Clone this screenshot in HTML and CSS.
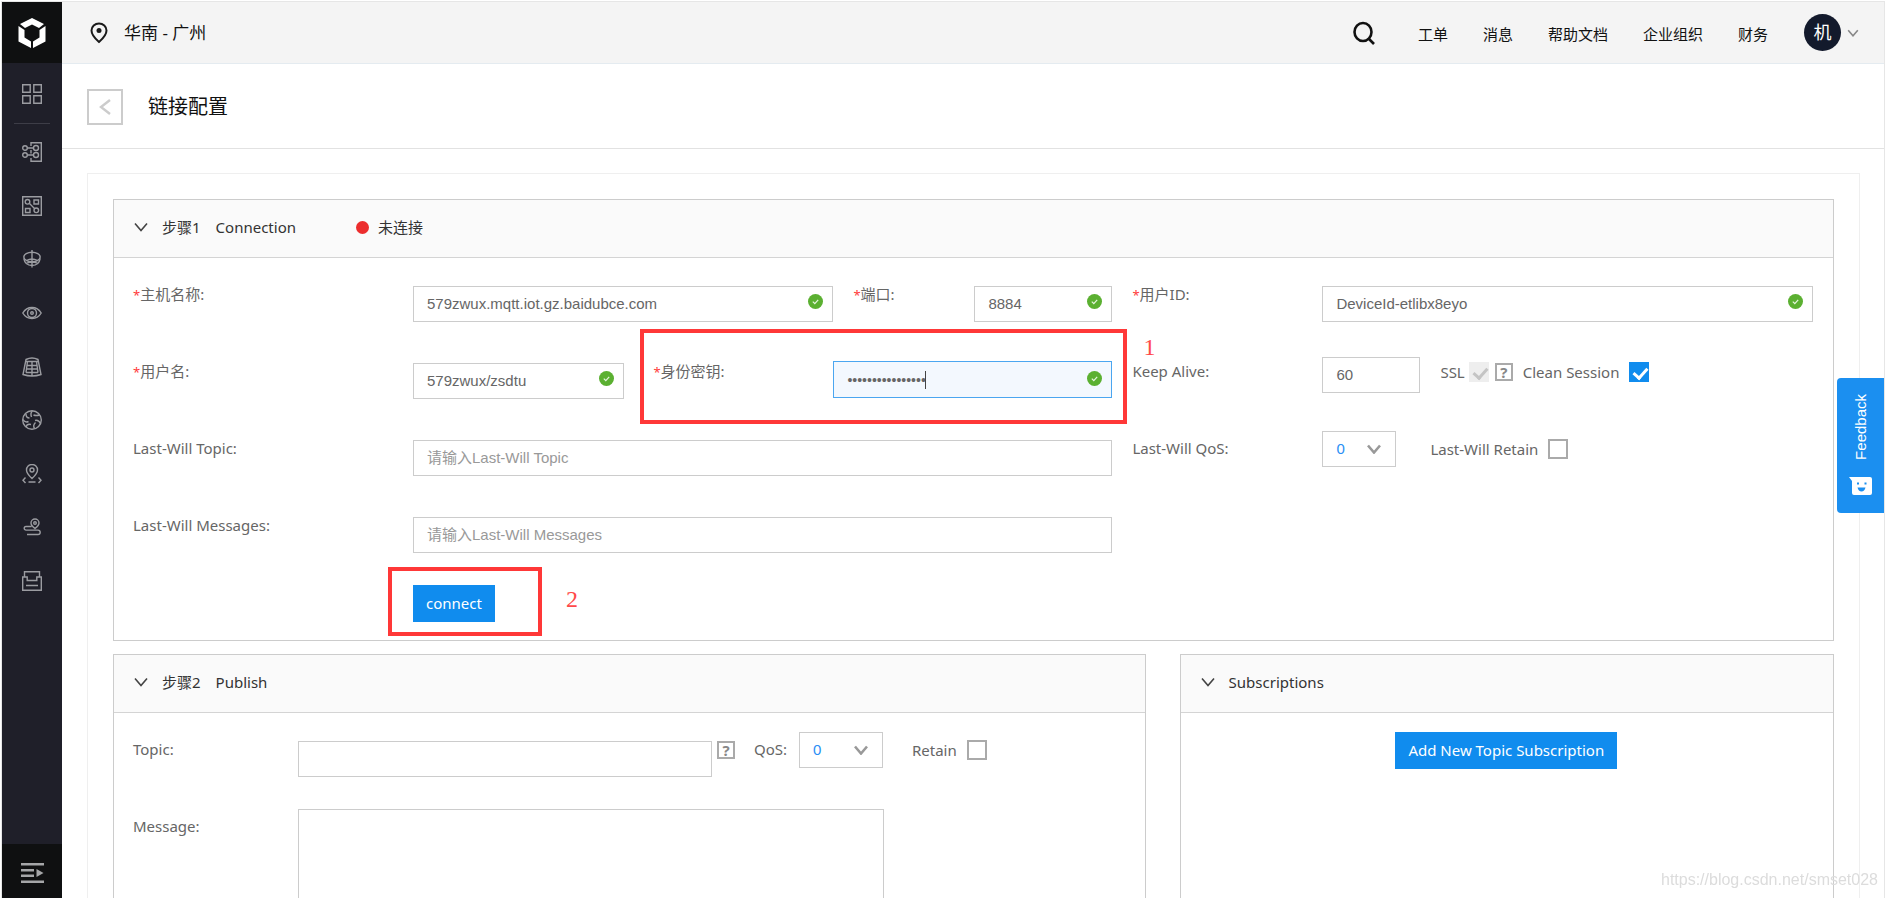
FILE: index.html
```html
<!DOCTYPE html>
<html lang="zh-CN">
<head>
    <meta charset="UTF-8">
    <title>链接配置</title>
    <link rel="stylesheet" href="styles.css">
</head>
<body>
<svg class="defs" aria-hidden="true">
    <symbol id="ok" viewBox="0 0 15 15">
        <circle cx="7.5" cy="7.5" r="7.5" fill="#5bb031"/>
        <path d="M4.8 7.6l2 2 3.4-3.8" fill="none" stroke="#e6f5df" stroke-width="1.2"/>
    </symbol>
    <symbol id="down" viewBox="0 0 14 10">
        <path d="M1 1.5l6 7 6-7" fill="none" stroke="currentColor"/>
    </symbol>
</svg>

<div class="app">
    <!-- 左侧导航 -->
    <nav class="side">
        <a class="logo" href="#" aria-label="首页">
            <svg width="30" height="32" viewBox="0 0 30 32">
                <path d="M15 1l12 6-5 4-7-3.500-7 3.500-5-4z"/>
                <path d="M1.500 9l6 4v7.500L14 24.500V31L1.500 24.500z"/>
                <path d="M28.500 9l-6 4v7.500L16 24.500V31l12.500-6.500z"/>
            </svg>
        </a>
        <a class="all" href="#" aria-label="全部产品">
            <svg width="20" height="20" viewBox="0 0 20 20"><path d="M.7.700h7.500v7.500H.7zM11.800.700h7.500v7.500h-7.500zM.7 11.800h7.500v7.500H.7zM11.800 11.800h7.500v7.500h-7.500z"/></svg>
        </a>
        <ul>
            <li><a href="#" aria-label="物接入"><svg width="20" height="20" viewBox="0 0 20 20"><path d="M9 4V.7h10.300v18.600H9V16M9 8v3.500M5.500 6h6M5.500 13h6"/><circle cx="3" cy="6" r="2.300"/><circle cx="3" cy="13" r="2.300"/><circle cx="14" cy="6" r="2.500"/><circle cx="14" cy="13" r="2.500"/></svg></a></li>
            <li><a href="#" aria-label="物管理"><svg width="20" height="20" viewBox="0 0 20 20"><path d="M.7.700h18.600v18.600H.7zM12 4h4.500v4H12zM3.500 12.500H8v4H3.500zM7.500 7.500l5 5"/><circle cx="5.500" cy="5.800" r="2.300"/><circle cx="14.300" cy="14.300" r="2.300"/></svg></a></li>
            <li><a href="#" aria-label="时序数据库"><svg width="20" height="20" viewBox="0 0 20 20"><ellipse cx="10" cy="8" rx="8.200" ry="4.800"/><path d="M10 1v17.500M4.500 11.500q5.500-3 11 0M1.800 9.500Q3 16.500 10 16.500t8.200-7M4.500 14.300q5.500-2.500 11 0"/></svg></a></li>
            <li><a href="#" aria-label="物可视"><svg width="20" height="20" viewBox="0 0 20 20"><path d="M.8 10Q4 4.500 10 4.500T19.200 10Q16 15.500 10 15.500T.8 10z"/><circle cx="10" cy="10" r="4.500"/><circle cx="10" cy="10" r="1.300"/></svg></a></li>
            <li><a href="#" aria-label="规则引擎"><svg width="20" height="20" viewBox="0 0 20 20"><path d="M4 2.500q6-3 12 0l3 15q-9 3-18 0zM4 4.500h12M5 8.500h10M4.500 12h11M4 15.500h12M10 4.500V19M5.500 4.500L4 15.500M14.500 4.500l1.500 11"/></svg></a></li>
            <li><a href="#" aria-label="物解析"><svg width="20" height="20" viewBox="0 0 20 20"><circle cx="10" cy="10" r="9.300"/><path d="M10.500 1Q8 3 9.500 7M4 4q0 4 3.500 4M1 9.500q2 3.500 5.500 2M4 17q1-3.500 5-2.500M12.500 18.500q-2-3 1-6M18.500 13.500q-2-4-5.500-3M17.500 5q-3.500 1-6 0"/></svg></a></li>
            <li><a href="#" aria-label="位置服务"><svg width="20" height="20" viewBox="0 0 20 20"><path d="M10 14.500Q4.500 9.500 4.500 6a5.500 5.500 0 0 1 11 0q0 3.500-5.500 8.500zM6.500 18h7M3.500 13.500L1 16.200l2.500 2.700M16.500 13.500l2.500 2.700-2.500 2.700"/><circle cx="10" cy="6" r="2"/></svg></a></li>
            <li><a href="#" aria-label="轨迹服务"><svg width="20" height="20" viewBox="0 0 20 20"><path d="M9.500 9.500H4a1.800 1.800 0 0 0 0 3.600h12a2.200 2.200 0 0 1 0 4.400H5M13 11.500Q9 8.500 9 6a4 4 0 0 1 8 0q0 2.500-4 5.500z"/><circle cx="13" cy="6" r="1.300"/></svg></a></li>
            <li><a href="#" aria-label="存储"><svg width="20" height="20" viewBox="0 0 20 20"><path d="M2.500 6V.7h15V6M.7 6h4.500v3.500h9.600V6h4.500v13.300H.7zM4 14.500h12"/></svg></a></li>
        </ul>
        <button class="expand" type="button" aria-label="展开菜单">
            <svg width="23" height="20" viewBox="0 0 23 20" fill="#a5a6a8"><path d="M0 0h23v2.500H0zM0 6h13v2.500H0zM0 11.500h13V14H0zM0 17.500h23V20H0zM15.500 6l7 4-7 4z"/></svg>
        </button>
    </nav>

    <div class="main">
        <header class="top">
            <svg class="pin" width="18" height="22" viewBox="0 0 18 22"><path d="M9 20Q1.500 13.500 1.500 8.500a7.500 7 0 0 1 15 0Q16.500 13.500 9 20z" fill="none" stroke="#1a1a1a" stroke-width="2"/><circle cx="9" cy="8.500" r="2.500" fill="#1a1a1a"/></svg>
            <span class="region">华南 - 广州</span>
            <button class="search" type="button" aria-label="搜索">
                <svg width="22" height="24" viewBox="0 0 22 24" fill="none" stroke="#111" stroke-width="2.600"><ellipse cx="10" cy="11" rx="8.500" ry="9"/><path d="M15.500 17.500l5.500 5.500"/></svg>
            </button>
            <a href="#">工单</a>
            <a href="#">消息</a>
            <a href="#">帮助文档</a>
            <a href="#">企业组织</a>
            <a href="#">财务</a>
            <button class="user" type="button">
                <span>机</span>
                <svg width="12" height="8"><use href="#down"/></svg>
            </button>
        </header>

        <div class="title">
            <button class="back" type="button" aria-label="返回"><svg width="12" height="16" viewBox="0 0 12 16"><path d="M11 1L2 8l9 7" fill="none" stroke="#ccc" stroke-width="2.400"/></svg></button>
            <h1>链接配置</h1>
        </div>

        <div class="content">
            <section class="panel">
                <h2>
                    <svg width="14" height="10"><use href="#down"/></svg>
                    <span class="step">步骤1</span>Connection
                    <span class="status">未连接</span>
                </h2>
                <form class="body conn">
                    <div class="row">
                        <label class="w280" for="host"><i>*</i>主机名称:</label>
                        <div class="field grow">
                            <input id="host" type="text" value="579zwux.mqtt.iot.gz.baidubce.com">
                            <svg class="ok"><use href="#ok"/></svg>
                        </div>
                        <label class="port-label" for="port"><i>*</i>端口:</label>
                        <div class="field port">
                            <input id="port" type="text" value="8884">
                            <svg class="ok"><use href="#ok"/></svg>
                        </div>
                    </div>
                    <div class="row">
                        <label class="w190" for="uid"><i>*</i>用户ID:</label>
                        <div class="field grow">
                            <input id="uid" type="text" value="DeviceId-etlibx8eyo">
                            <svg class="ok"><use href="#ok"/></svg>
                        </div>
                    </div>

                    <div class="row">
                        <label class="w280" for="uname"><i>*</i>用户名:</label>
                        <div class="field grow">
                            <input id="uname" type="text" value="579zwux/zsdtu">
                            <svg class="ok"><use href="#ok"/></svg>
                        </div>
                        <div class="secret">
                            <label for="pwd"><i>*</i>身份密钥:</label>
                            <div class="field grow active">
                                <input id="pwd" type="password" value="abcdefgh12345678">
                                <svg class="ok"><use href="#ok"/></svg>
                            </div>
                            <span class="mark"></span>
                            <span class="mark-no">1</span>
                        </div>
                    </div>
                    <div class="row">
                        <label class="w190" for="alive">Keep Alive:</label>
                        <div class="field alive"><input id="alive" type="text" value="60"></div>
                        <div class="opts">
                            <label class="check">SSL<input type="checkbox" checked disabled></label>
                            <button class="help" type="button">?</button>
                            <label class="check wide">Clean Session<input type="checkbox" checked></label>
                        </div>
                    </div>

                    <div class="row">
                        <label class="w280" for="wtopic">Last-Will Topic:</label>
                        <div class="field grow"><input id="wtopic" type="text" placeholder="请输入Last-Will Topic"></div>
                    </div>
                    <div class="row">
                        <label class="w190" for="wqos">Last-Will QoS:</label>
                        <div class="select">
                            <select id="wqos"><option>0</option><option>1</option></select>
                            <svg width="14" height="10"><use href="#down"/></svg>
                        </div>
                        <div class="opts retain">
                            <label class="check wide">Last-Will Retain<input type="checkbox"></label>
                        </div>
                    </div>

                    <div class="row left">
                        <label class="w280" for="wmsg">Last-Will Messages:</label>
                        <div class="field grow"><input id="wmsg" type="text" placeholder="请输入Last-Will Messages"></div>
                    </div>

                    <div class="submit left">
                        <button class="btn" type="button">connect</button>
                        <span class="mark"></span>
                        <span class="mark-no">2</span>
                    </div>
                </form>
            </section>

            <div class="cols">
                <section class="panel">
                    <h2>
                        <svg width="14" height="10"><use href="#down"/></svg>
                        <span class="step">步骤2</span>Publish
                    </h2>
                    <form class="body">
                        <div class="row">
                            <label class="w165" for="topic">Topic:</label>
                            <div class="field topic"><input id="topic" type="text"></div>
                            <div class="opts tip"><button class="help" type="button">?</button></div>
                            <label class="qos-label" for="qos">QoS:</label>
                            <div class="select big">
                                <select id="qos"><option>0</option><option>1</option></select>
                                <svg width="14" height="10"><use href="#down"/></svg>
                            </div>
                            <div class="opts retain">
                                <label class="check wide">Retain<input type="checkbox"></label>
                            </div>
                        </div>
                        <div class="row">
                            <label class="w165" for="msg">Message:</label>
                            <textarea id="msg"></textarea>
                        </div>
                    </form>
                </section>
                <section class="panel">
                    <h2>
                        <svg width="14" height="10"><use href="#down"/></svg>
                        Subscriptions
                    </h2>
                    <div class="body subs">
                        <button class="btn" type="button">Add New Topic Subscription</button>
                    </div>
                </section>
            </div>
        </div>
    </div>
</div>

<button class="feedback" type="button">
    <span>Feedback</span>
    <svg width="23" height="18" viewBox="0 0 23 18"><path d="M0 0h21q2 0 2 2v14q0 2-2 2H5q-2 0-2-2V4z" fill="#fff"/><path d="M8 5.500h2v2H8zM15.500 5.500h2v2h-2zM8.500 10.500h8q-1 4-4 4t-4-4z" fill="#1b8ff0"/></svg>
</button>
<div class="watermark">https://blog.csdn.net/smset028</div>
</body>
</html>
```
FILE: styles.css
```css
* {
    margin: 0;
    padding: 0;
    box-sizing: border-box;
}

body {
    background: #fff;
    color: #333;
    font: 15px/20px "Noto Sans", "Noto Sans CJK SC", sans-serif;
    overflow: hidden;
}

li {
    list-style: none;
}

a {
    color: inherit;
    text-decoration: none;
}

button {
    border: 0;
    background: none;
    font: inherit;
    cursor: pointer;
}

i {
    color: #ff3b3b;
    font-size: 13px;
    font-style: normal;
}

svg {
    display: block;
    flex: none;
}

.defs {
    position: absolute;
    width: 0;
    height: 0;
}

.app {
    display: flex;
    height: 100vh;
    margin: 1px 1px 0;
    border: 1px solid #e6e6e6;
    border-bottom: 0;
}

/* 左侧导航 */
.side {
    display: flex;
    flex-direction: column;
    flex: none;
    width: 60px;
    height: calc(100vh - 2px);
    background: #1f1f29;
}

.side a {
    display: flex;
    justify-content: center;
}

.side a svg {
    fill: none;
    stroke: #9b9ca1;
    stroke-width: 1.4;
}

.side .logo {
    height: 61px;
    align-items: center;
    background: #0f1011;
}

.side .logo svg {
    fill: #fff;
    stroke: none;
}

.side .all {
    height: 61px;
    margin: 0 12px 18px;
    padding-top: 21px;
    border-bottom: 1px solid #3d3d47;
}

.side ul {
    display: flex;
    flex-direction: column;
    justify-content: space-between;
    height: 50vh;
}

.side .expand {
    display: flex;
    justify-content: center;
    align-items: center;
    height: 54px;
    margin-top: auto;
    padding-top: 3px;
    background: #0f1011;
}

.main {
    flex: 1;
    min-width: 0;
    overflow: hidden;
}

/* 顶部 */
.top {
    display: flex;
    align-items: center;
    height: 62px;
    padding: 0 25px 0 28px;
    border-bottom: 1px solid #e4ebf0;
    background: #f4f4f4;
    color: #111;
}

.top .region {
    margin: 0 auto 0 16px;
    padding-top: 1px;
    font-size: 17px;
}

.top a {
    margin-left: 35px;
    padding-top: 3px;
}

.top .search {
    margin-right: 8px;
}

.top .user {
    display: flex;
    align-items: center;
    margin-left: 36px;
    color: #888;
}

.top .user span {
    width: 37px;
    margin-right: 6px;
    border-radius: 50%;
    background: #131a2c;
    color: #fff;
    font-size: 18px;
    line-height: 37px;
}

.top .user svg {
    stroke-width: 2;
}

.title {
    display: flex;
    align-items: center;
    height: 85px;
    padding: 1px 25px 0;
    border-bottom: 1px solid #e2e2e2;
}

.title h1 {
    margin-left: 25px;
    padding-top: 1px;
    color: #111;
    font-size: 20px;
    font-weight: 400;
}

.back {
    display: flex;
    justify-content: center;
    align-items: center;
    width: 36px;
    height: 36px;
    border: 2px solid #ccc;
}

/* 内容 */
.content {
    margin: 24px 24px 0 25px;
    padding: 25px;
    border: 1px solid #efefef;
}

.panel {
    border: 1px solid #ccc;
}

.panel h2 {
    display: flex;
    align-items: center;
    height: 58px;
    padding: 0 0 3px 20px;
    border-bottom: 1px solid #d4d4d4;
    background: #fafafa;
    font-size: 15px;
    font-weight: 400;
}

.panel h2 svg {
    margin-right: 14px;
    color: #444;
    stroke-width: 1.6;
}

.step {
    margin-right: 15px;
}

.status {
    display: flex;
    align-items: center;
    margin-left: 60px;
}

.status::before {
    content: "";
    width: 13px;
    height: 13px;
    margin-right: 9px;
    border-radius: 50%;
    background: #ec2d2d;
}

.body {
    padding: 19px 20px 18px 19px;
    color: #666;
}

.conn {
    display: grid;
    grid-template-columns: minmax(0, 59fr) minmax(0, 41fr);
    column-gap: 20px;
}

.left {
    grid-column: 1;
}

.row {
    display: flex;
    align-items: flex-start;
    height: 77px;
}

.row > label, .secret > label {
    flex: none;
    padding-top: 7px;
}

.w280 {
    width: 280px;
}

.w190 {
    width: 190px;
}

.w165 {
    width: 165px;
}

.field {
    position: relative;
    margin-top: 9px;
}

.grow {
    flex: 1;
}

.port-label {
    width: 141px;
    padding-left: 20px;
}

.port {
    width: 138px;
}

.field input, .select select, textarea {
    display: block;
    width: 100%;
    height: 36px;
    padding: 0 13px 2px;
    border: 1px solid #ccc;
    border-radius: 0;
    outline: 0;
    background: #fff;
    color: #666;
    font: 15px "Liberation Sans", "Noto Sans CJK SC", sans-serif;
}

.field input::placeholder {
    color: #999;
}

.ok {
    position: absolute;
    top: 8px;
    right: 10px;
    width: 15px;
    height: 15px;
}

.secret {
    position: relative;
    display: flex;
    width: 459px;
    margin-left: 29px;
}

.secret > label {
    width: 180px;
}

.secret .field {
    margin-top: 7px;
}

.active .ok {
    top: 10px;
}

.active input {
    height: 37px;
    padding-bottom: 0;
    border-color: #4ba6f0;
    background: #f3f8fe;
    font-size: 14px;
}

/* 输入光标 */
.active::after {
    content: "";
    position: absolute;
    top: 10px;
    left: 92px;
    width: 1px;
    height: 18px;
    background: #444;
}

.mark {
    position: absolute;
    border: 4px solid #ff3838;
    pointer-events: none;
}

.mark-no {
    position: absolute;
    color: #ff4a4a;
    font: 24px/24px "Liberation Serif", serif;
}

.secret .mark {
    top: -25px;
    right: -15px;
    left: -13px;
    height: 95px;
}

.secret .mark-no {
    top: -19px;
    right: -43px;
}

.alive {
    width: 98px;
    margin-top: 3px;
}

.opts {
    display: flex;
    align-items: center;
    gap: 6px;
    height: 36px;
    margin-left: 20px;
}

.retain {
    margin-left: 34px;
}

.check {
    display: flex;
    align-items: center;
    gap: 4px;
}

.wide {
    gap: 10px;
}

.help + .check {
    margin-left: 4px;
}

.check input {
    appearance: none;
    position: relative;
    width: 20px;
    height: 20px;
    border: 2px solid #aaa;
    background: #fff;
}

.check input:checked {
    border-color: #108cee;
    background: #108cee;
}

.check input:disabled {
    border-color: #eee;
    background: #eee;
}

.check input:checked::after {
    content: "";
    position: absolute;
    top: 1px;
    left: 5px;
    width: 6px;
    height: 11px;
    border: solid #fff;
    border-width: 0 3px 3px 0;
    transform: rotate(42deg);
}

.check input:disabled::after {
    border-color: #c4c4c4;
}

.help {
    width: 18px;
    height: 18px;
    border: 2px solid #aaa;
    color: #888;
    font-weight: 700;
    line-height: 14px;
}

.select {
    position: relative;
    width: 74px;
}

.select select {
    appearance: none;
    color: #2b8ff5;
}

.select svg {
    position: absolute;
    top: 13px;
    right: 15px;
    color: #999;
    stroke-width: 2.6;
    pointer-events: none;
}

.btn {
    height: 37px;
    padding: 0 13px 2px;
    background: #108cee;
    color: #fff;
}

.submit {
    position: relative;
    margin-left: 280px;
}

.submit .mark {
    top: -18px;
    left: -25px;
    width: 154px;
    height: 69px;
}

.submit .mark-no {
    top: 2px;
    left: 153px;
}

.cols {
    display: grid;
    grid-template-columns: minmax(0, 1032fr) minmax(0, 654fr);
    column-gap: 34px;
    margin-top: 13px;
}

.topic {
    width: 414px;
}

.tip {
    margin-left: 5px;
}

.qos-label {
    width: 64px;
    padding-left: 19px;
}

.big {
    width: 84px;
}

.big + .retain {
    margin-left: 29px;
}

textarea {
    width: 586px;
    height: 200px;
    resize: none;
}

.subs {
    text-align: center;
}

.feedback {
    position: fixed;
    top: 378px;
    right: 2px;
    display: flex;
    flex-direction: column;
    align-items: center;
    gap: 17px;
    width: 47px;
    height: 135px;
    padding-top: 16px;
    border-radius: 4px 0 0 4px;
    background: #1b8ff0;
    color: #fff;
}

.feedback span {
    font: 15px/20px "Liberation Sans", sans-serif;
    writing-mode: vertical-rl;
    transform: rotate(180deg);
}

.watermark {
    position: fixed;
    right: 8px;
    bottom: 8px;
    color: #dcdcdc;
    font: 16px/20px "Liberation Sans", sans-serif;
}
```
